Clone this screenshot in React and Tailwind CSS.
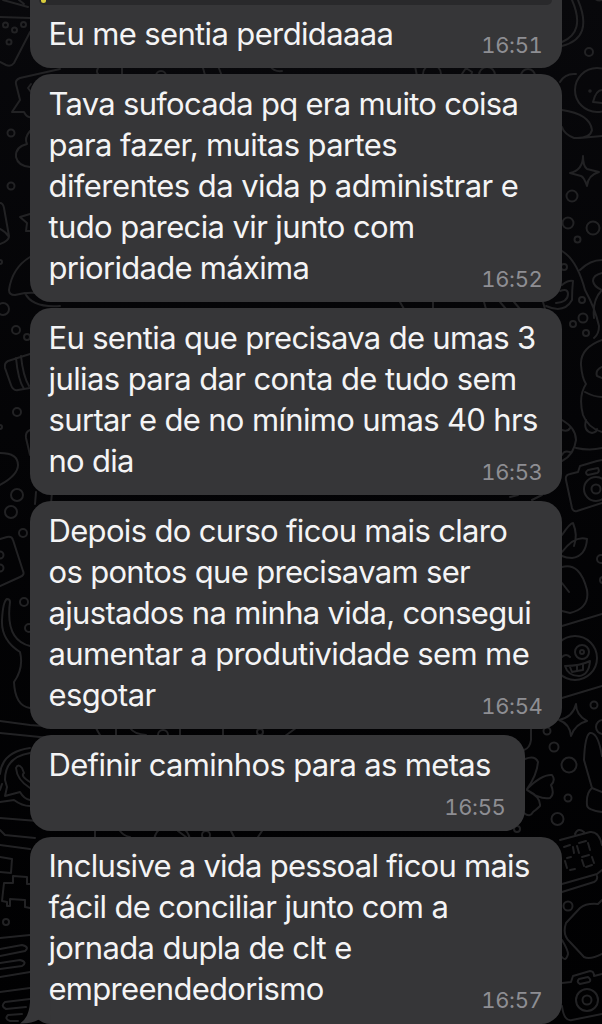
import React from 'react';

const messages = [
  {
    time: '16:51',
    quoted: true,
    box: 'w-[532px] h-[68px] rounded-b-[21px] pt-[13px]',
    lines: [['Eu me sentia perdidaaaa', 'tracking-[-0.64px]']],
  },
  {
    time: '16:52',
    box: 'w-[532px] h-[228px] rounded-[21px] pt-[9px]',
    lines: [
      ['Tava sufocada pq era muito coisa', 'tracking-[-0.72px]'],
      ['para fazer, muitas partes', 'tracking-[-0.62px]'],
      ['diferentes da vida p administrar e', 'tracking-[-0.58px]'],
      ['tudo parecia vir junto com', 'tracking-[-0.62px]'],
      ['prioridade máxima', 'tracking-[-0.7px]'],
    ],
  },
  {
    time: '16:53',
    box: 'w-[532px] h-[187px] rounded-[21px] pt-[9px]',
    lines: [
      ['Eu sentia que precisava de umas 3', 'tracking-[-0.68px]'],
      ['julias para dar conta de tudo sem', 'tracking-[-0.6px]'],
      ['surtar e de no mínimo umas 40 hrs', 'tracking-[-0.65px]'],
      ['no dia', 'tracking-[-0.7px]'],
    ],
  },
  {
    time: '16:54',
    box: 'w-[532px] h-[228px] rounded-[21px] pt-[9px]',
    lines: [
      ['Depois do curso ficou mais claro', 'tracking-[-0.67px]'],
      ['os pontos que precisavam ser', 'tracking-[-0.68px]'],
      ['ajustados na minha vida, consegui', 'tracking-[-0.67px]'],
      ['aumentar a produtividade sem me', 'tracking-[-0.62px]'],
      ['esgotar', 'tracking-[-0.63px]'],
    ],
  },
  {
    time: '16:55',
    box: 'w-[495px] h-[95.5px] rounded-[21px] pt-[9px]',
    lines: [['Definir caminhos para as metas', 'tracking-[-0.67px]']],
  },
  {
    time: '16:57',
    tail: true,
    box: 'w-[532px] h-[187px] rounded-[21px] pt-[8.5px]',
    lines: [
      ['Inclusive a vida pessoal ficou mais', 'tracking-[-0.74px]'],
      ['fácil de conciliar junto com a', 'tracking-[-0.65px]'],
      ['jornada dupla de clt e', 'tracking-[-0.65px]'],
      ['empreendedorismo', 'tracking-[-0.7px]'],
    ],
  },
];

// [cx, cy, r]
const bubbles = [
  [5.5, 25, 2.5], [14.5, 30, 2.5], [23.5, 24.5, 2.5], [9, 42, 2.5],
  [11, 133, 3.5], [11, 186, 3.5], [0, 262, 2], [3, 309, 6], [16, 330, 4], [27, 337, 3],
  [17, 412, 4], [0, 427, 2], [17, 495, 6], [11, 512, 6], [23, 533, 4],
  [0, 555, 3.5], [0, 568, 3.5], [24, 602, 4], [29, 628, 4], [6, 922, 3],
  [161, 76, 5], [432, 74, 9], [487, 75, 8], [528, 76, 7],
  [589, 52, 4], [597, 90, 22], [590, 91, 0.8],
  [572, 196, 5.5], [568, 223, 5.5], [593, 228, 6.5], [577.5, 239.5, 3], [564, 267, 3],
  [582, 300, 3], [583, 318, 4.5], [573, 324, 3], [586, 333, 3],
  [596, 489, 12], [596, 489, 4.5], [601, 559, 4], [603, 580, 3],
  [575, 658, 22], [582, 652, 7], [582, 652, 2],
  [594, 705, 3.5], [603, 727, 7], [547, 731, 3.5], [554, 747, 4.5], [569, 765, 7.5],
  [568, 798, 3.5], [557.5, 819, 6], [517, 829, 3], [568, 906, 4.5],
  [587, 1000, 11], [587, 1000, 4.5],
  [163, 735, 5], [260, 732, 3], [206, 835, 4], [172, 842, 18],
];

const strokes = [
  // left edge
  'M3 0L28 7M19 0L24 4M0 17L30 18',
  'M30 32L14 63Q11 67 6 65L0 62',
  'M60 69L20 78Q15 80 16 84L20 100L12 112L24 112Q27 118 31 117M31 84L28 88L31 92',
  'M30 131Q24 138 27 144Q15 147 16 157Q18 166 30 167',
  'M30 214L20 217L27 223L26 231L30 231',
  'M0 203Q3 203 4 208L9 236Q9 241 0 244M0 229Q6 232 9 237',
  'M30 257Q12 268 9 290Q9 295 15 295Q27 292 36 293M25 293Q32 308 60 306',
  'M30 354L8 361Q4 363 5 368L11 385Q13 391 18 390L30 388M16 358Q18 380 24 389M21 356Q23 376 29 386',
  'M30 430Q25 432 26 438L30 455',
  'M0 453Q18 453 18 465Q18 475 0 485',
  'M0 539L7 537Q12 536 13 540L23 571Q25 575 20 577L0 586',
  'M10 602Q10 599 7 599Q3 601 2 620Q1 640 20 652Q24 668 14 682Q15 706 30 708M10 602Q5 640 30 646',
  'M0 721L30 725L70 728M0 733L50 738',
  'M30 748Q2 752 0 774M0 790L2 784M30 753Q5 757 5 780L7 787L5 796L20 792Q24 799 30 800M0 802L14 800Q22 806 30 806',
  'M16 768Q18 763 22 768L24 773Q20 776 30 782M16 768Q17 780 30 788',
  'M0 818L50 822M0 830L5 835L35 838M0 845L30 849',
  'M0 857L12 859L11 873L0 872M30 884L27 884L27 877L13 876L13 883L4 883L2 901L7 902L7 906L10 906L10 899L25 900L25 907L30 908',
  'M0 938L30 935M0 949L22 945Q30 947 25 951L0 956M0 963L20 960Q28 962 22 966L0 969M0 977L30 972M0 992L30 988',
  'M30 999L5 1002Q0 1006 6 1009L26 1007M22 1014L8 1015Q4 1019 10 1021L18 1021',
  // right edge
  'M572 0Q586 32 562 42M578 0Q594 38 562 46M593 -3Q598 2 602 0',
  'M593 102Q596 90 602 90M593 102L602 103',
  'M560 82Q565 73 576 74M562 110Q590 114 592 130Q590 139 574 138Q564 134 562 127M580 138L602 136',
  'M583 156Q583 166 587 169L599 172Q588 175 587 186Q584 177 581 176L570 173Q583 170 583 156Z',
  'M562 251Q577 260 585 290Q595 308 599 326Q599 334 594 338M580 270Q590 260 602 260M602 273Q593 275 593 281Q594 287 602 290M602 290Q592 300 594 318',
  'M562 285Q568 280 573 281Q572 290 572 300Q564 314 546 306M560 291Q568 288 568 294Q568 302 556 303',
  'M602 340Q580 348 581 365Q582 378 586 384Q578 396 583 415Q588 428 602 432M585 392Q594 397 602 397M586 420Q583 431 592 433Q597 432 597 429M602 367Q595 370 597 376L602 378',
  'M562 420Q576 428 576 440Q574 455 562 461M562 430Q568 432 570 428M562 455Q564 450 570 452M576 448Q590 451 602 448',
  'M602 503L577 511Q573 512 572 508L566 480Q565 475 570 474L578 472L580 466L597 461L602 460M588 470L598 468Q600 472 597 473L588 475Q584 473 588 470Z',
  'M562 535Q570 523 573 523Q578 535 574 546M562 552Q575 535 587 539Q586 556 572 558Q566 558 562 556',
  'M562 567Q580 562 587 590Q590 608 570 613L562 611M562 583L569 592M562 626L602 614',
  'M565 666Q580 666 590 661Q589 675 579 676Q568 676 565 666M570 667L572 672L577 671L577 665M577 671L583 670L583 664M562 657Q566 653 570 657',
  'M562 698L602 686M576 704Q576 715 587 721Q575 724 571 736Q570 724 559 720Q573 717 576 704Z',
  'M531 728L531 740Q530 748 524 750',
  'M602 756Q598 732 590 733Q585 735 584 760L592 788Q586 793 587 805Q587 810 602 812M592 788L602 792',
  'M525 759Q535 755 538 762Q537 775 527 789Q542 774 552 775Q556 780 551 785Q555 794 550 798Q540 800 527 790Q541 797 540 806Q536 810 533 812Q530 818 524 813',
  'M560 840L590 832Q599 831 602 845M575 834Q578 827 584 832M562 884L597 874L602 870M562 892L594 882Q598 880 597 876',
  'M602 900L598 904Q586 903 580 908L566 923Q562 935 570 942L584 957Q590 960 602 954M562 940Q568 950 568 954Q566 962 562 957',
  'M562 983L571 982L573 976L590 971Q594 971 594 976L602 974M579 979L588 977Q592 980 589 982L580 984Q576 982 579 979ZM562 1006Q564 1022 572 1020L602 1014',
  // watch digits
  'M564 847L570 845M573 847L574 853M571 857L567 858M565 861L567 868M570 870L575 869',
  'M579 843L586 841M577 846L579 853M588 843L590 850M582 857L589 855M582 860L584 866M592 857L594 863M586 867L592 865',
  // slivers seen between messages
  'M98 68Q96 72 98 74M122 66L122 76M203 68L205 75M218 66L222 76M270 66Q274 72 282 71M415 66L417 76M462 74L466 68L472 72L471 76',
  'M400 302L404 309M433 302L433 309M484 302L486 309M500 302L506 309M514 302L520 309M543 302L545 309',
  'M36 492L35 504M52 492L51 504M510 497L518 495M532 500L542 495',
  'M96 728Q98 732 100 735M116 728L116 736M130 728Q134 734 146 735M180 728L180 736M223 728L223 736M285 736L296 728',
  'M95 831L95 837M120 831Q124 836 130 837M178 831L186 837M231 831L234 837M262 831L258 837',
];

const Wallpaper = () => (
  <svg
    className="absolute inset-0 h-full w-full"
    viewBox="0 0 602 1024"
    fill="none"
    stroke="#222224"
    strokeWidth="2"
    strokeLinecap="round"
    strokeLinejoin="round"
  >
    {strokes.map((d) => (
      <path key={d} d={d} />
    ))}
    {bubbles.map(([cx, cy, r]) => (
      <circle key={`${cx}-${cy}-${r}`} cx={cx} cy={cy} r={r} />
    ))}
  </svg>
);

const Message = ({ message }) => (
  <div className={`relative shrink-0 bg-[#363638] pl-[18.5px] ${message.box}`}>
    {message.quoted && (
      <div className="absolute top-0 left-[9px] h-[4.5px] w-[513px] overflow-hidden rounded-b-[9px] bg-[#29292b]">
        <div className="ml-[2px] h-[2.5px] w-[5px] rounded-b-full bg-[#d8cc3c]" />
      </div>
    )}
    {message.tail && (
      <svg
        className="absolute bottom-0 -left-[10px] h-[26px] w-[40px]"
        viewBox="0 0 40 26"
        fill="#363638"
      >
        <path d="M10 0V4Q9 20 0 25.5Q11 26 19 21.5Q25 24 31 26L30 0Z" />
      </svg>
    )}
    <p className="relative text-[31px] leading-[41px] text-[#f4f4f5]">
      {message.lines.map(([text, tracking]) => (
        <span key={text} className={`block whitespace-nowrap ${tracking}`}>
          {text}
        </span>
      ))}
    </p>
    <span className="absolute right-[19.5px] bottom-[9.5px] text-[22px] leading-[28px] tracking-[-0.35px] text-[#8e8e93] tabular-nums">
      {message.time}
    </span>
  </div>
);

const App = () => {
  return (
    <div className="relative h-[1024px] w-[602px] overflow-hidden bg-linear-to-b from-[#08080b] to-[#010102] font-['Inter',sans-serif]">
      <Wallpaper />
      <div className="relative flex flex-col items-start gap-[6px] pl-[30px]">
        {messages.map((message) => (
          <Message key={message.time} message={message} />
        ))}
      </div>
    </div>
  );
};

export default App;
